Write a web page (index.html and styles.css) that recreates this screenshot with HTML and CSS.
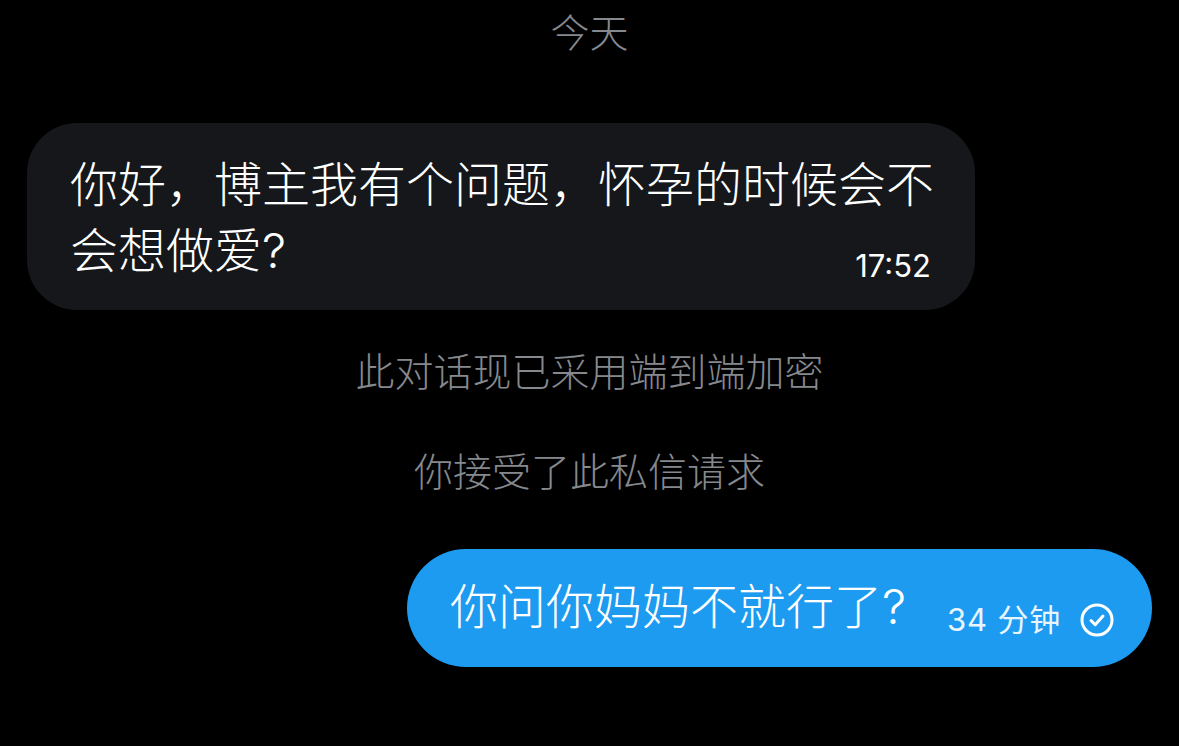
FILE: index.html
```html
<!DOCTYPE html>
<html>
<head>
    <title>私信</title>
    <link rel="stylesheet" href="styles.css">
</head>
<body>
    <div class="chat">
        <div class="notice day">今天</div>

        <div class="bubble incoming">
            <div class="text">你好，博主我有个问题，怀孕的时候会不</div>
            <div class="last-line">
                <span class="text">会想做爱?</span>
                <span class="time">17:52</span>
            </div>
        </div>

        <div class="notice encrypted">此对话现已采用端到端加密</div>
        <div class="notice accepted">你接受了此私信请求</div>

        <div class="bubble outgoing">
            <span class="text">你问你妈妈不就行了?</span>
            <span class="meta">
                <span class="time">34 分钟</span>
                <svg class="check" width="34" height="34" viewBox="0 0 34 34" fill="none" stroke="#fff" stroke-width="3" stroke-linecap="round" stroke-linejoin="round">
                    <circle cx="17" cy="17" r="15"/>
                    <path d="M11 17.5l4.2 4.2 7.8-8.7"/>
                </svg>
            </span>
        </div>
    </div>
</body>
</html>
```

FILE: styles.css
```css
html, body { margin: 0; height: 100%; background: #000; overflow: hidden; }

body {
    font-family: "Inter", "Noto Sans CJK SC", sans-serif;
    font-weight: 300;
    color: #fff;
}

.chat {
    display: flex;
    flex-direction: column;
    padding: 8px 27px 0 27px;
}

.notice {
    align-self: center;
    color: #85898e;
    font-size: 39px;
    line-height: 50px;
}

.encrypted { margin-top: 37px; }
.accepted { margin-top: 50px; }

.bubble { box-sizing: border-box; }

.incoming {
    align-self: flex-start;
    width: 948px;
    height: 187px;
    margin-top: 65px;
    padding: 29px 44px 0 43px;
    background: #15171a;
    border-radius: 50px;
}

.incoming .text {
    font-size: 48px;
    line-height: 66px;
    white-space: nowrap;
}

.last-line {
    display: flex;
    justify-content: space-between;
    align-items: flex-start;
}

.incoming .time {
    margin-top: 30px;
    font-size: 31px;
    font-weight: 400;
    line-height: 36px;
}

.outgoing {
    align-self: flex-end;
    display: flex;
    align-items: center;
    width: 745px;
    height: 118px;
    margin-top: 52px;
    padding: 0 38px 0 43px;
    background: #1d9bf0;
    border-radius: 59px;
}

.outgoing .text {
    font-size: 48px;
    line-height: 60px;
    white-space: nowrap;
    flex: 1;
    margin-top: -3px;
}

.meta {
    display: flex;
    align-items: center;
    gap: 19px;
    margin-top: 23px;
}

.outgoing .time {
    font-size: 31px;
    font-weight: 400;
    line-height: 36px;
    letter-spacing: 0.8px;
    color: #e8f5fe;
}
```
